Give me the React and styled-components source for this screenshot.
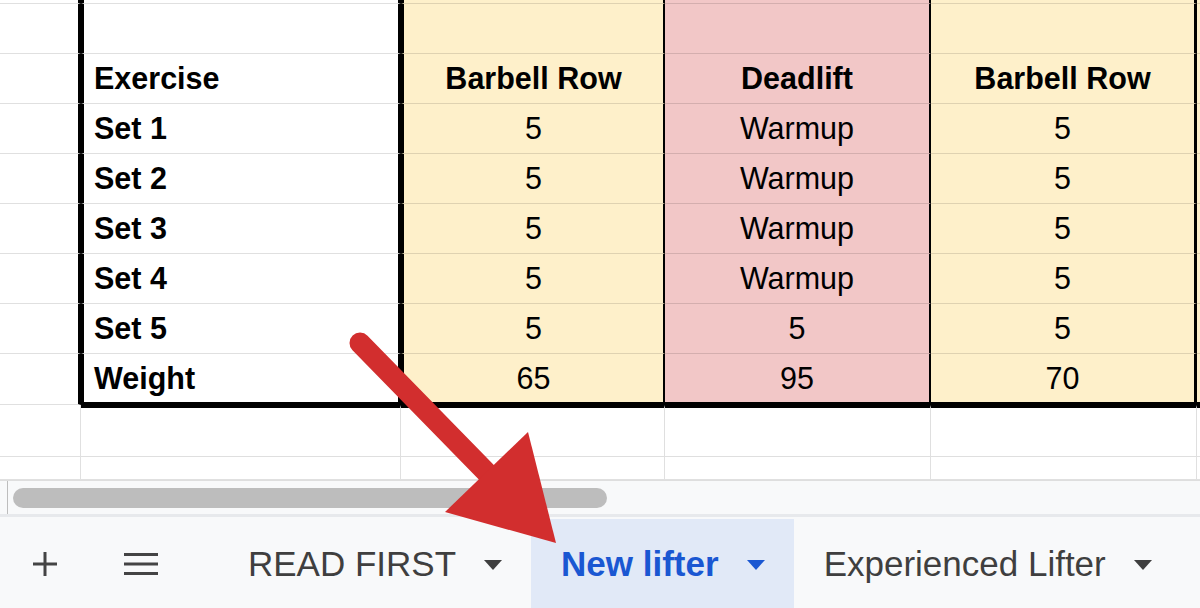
import React from "react";
import styled, { createGlobalStyle } from "styled-components";

const GlobalStyle = createGlobalStyle`
  html, body { margin: 0; padding: 0; background: #fff; }
  body { font-family: "Liberation Sans", Arial, Helvetica, sans-serif; overflow: hidden; }
  * { box-sizing: border-box; }
`;

const GRID = "rgba(0, 0, 0, 0.12)";
const HEADER_LINE = "#bdbdbd";
const YELLOW = "#fef0ca";
const PINK = "#f2c7c7";
const B3 = "3px solid #000";
const B2 = "2px solid #000";

const Page = styled.div`
  position: relative;
  width: 1200px;
  height: 608px;
  display: flex;
  flex-direction: column;
  overflow: hidden;
`;

const Sheet = styled.div`
  display: grid;
  grid-template-columns: 8px 73px 320px 264px 266px 266px 3px;
  grid-template-rows: 4px repeat(7, 50px) 51px 52px 23px;
  height: 480px;
  background: #fff;
`;

const Cell = styled.div`
  display: flex;
  align-items: center;
  justify-content: ${(p) => (p.$center ? "center" : "flex-start")};
  padding-left: ${(p) => (p.$center ? "0" : "10px")};
  background: ${(p) => p.$bg || "#fff"};
  border-right: ${(p) => p.$br || `1px solid ${GRID}`};
  border-bottom: ${(p) => p.$bb || `1px solid ${GRID}`};
  border-left: ${(p) => p.$bl || "none"};
  border-top: ${(p) => p.$bt || "none"};
  font-size: 30.5px;
  font-weight: ${(p) => (p.$bold ? 700 : 400)};
  color: #000;
  white-space: nowrap;
  overflow: hidden;
`;

const ScrollArea = styled.div`
  height: 34px;
  display: flex;
  background: #f8f9fa;
  border-top: 1px solid #dedede;
`;

const ScrollStub = styled.div`
  width: 8px;
  border-right: 1px solid ${HEADER_LINE};
`;

const ScrollTrack = styled.div`
  flex: 1;
  padding: 7px 0 0 5px;
`;

const Thumb = styled.div`
  width: 594px;
  height: 20px;
  border-radius: 10px;
  background: #bdbdbd;
`;

const TabBar = styled.div`
  height: 94px;
  display: flex;
  align-items: stretch;
  padding: 2px 0 0 21px;
  background: #f8f9fa;
  border-top: 3px solid #e7e9ec;
`;

const IconButton = styled.div`
  width: 48px;
  display: flex;
  align-items: center;
  justify-content: center;
  margin-right: ${(p) => p.$gap || 0}px;
`;

const Tab = styled.div`
  display: flex;
  align-items: center;
  gap: 28px;
  padding: 0 29px 0 30px;
  background: ${(p) => (p.$active ? "#e1e9f7" : "transparent")};
  color: ${(p) => (p.$active ? "#1a57d2" : "#3f3f3f")};
  font-size: 35px;
  font-weight: ${(p) => (p.$active ? 700 : 400)};
  white-space: nowrap;
`;

const Caret = styled.span`
  width: 0;
  height: 0;
  border-left: 9px solid transparent;
  border-right: 9px solid transparent;
  border-top: 10px solid currentColor;
  margin-top: 2px;
`;

const ArrowLayer = styled.svg`
  position: absolute;
  left: 0;
  top: 0;
  pointer-events: none;
`;

const rows = [
  { label: "", cells: ["", "", ""] },
  { label: "", cells: ["", "", ""] },
  { label: "Exercise", cells: ["Barbell Row", "Deadlift", "Barbell Row"], head: true },
  { label: "Set 1", cells: ["5", "Warmup", "5"] },
  { label: "Set 2", cells: ["5", "Warmup", "5"] },
  { label: "Set 3", cells: ["5", "Warmup", "5"] },
  { label: "Set 4", cells: ["5", "Warmup", "5"] },
  { label: "Set 5", cells: ["5", "5", "5"] },
  { label: "Weight", cells: ["65", "95", "70"] },
];

function TableRow({ row, last }) {
  const bb = last ? B3 : undefined;
  return (
    <>
      <Cell $br={`1px solid ${HEADER_LINE}`} />
      <Cell $br={B3} />
      <Cell $bl={B3} $br={B3} $bb={bb} $bold>
        {row.label}
      </Cell>
      <Cell $bl={B3} $br={B2} $bb={bb} $bg={YELLOW} $center $bold={row.head}>
        {row.cells[0]}
      </Cell>
      <Cell $br={B2} $bb={bb} $bg={PINK} $center $bold={row.head}>
        {row.cells[1]}
      </Cell>
      <Cell $br={B3} $bb={bb} $bg={YELLOW} $center $bold={row.head}>
        {row.cells[2]}
      </Cell>
      <Cell $br="none" $bb={bb} $bg={YELLOW} />
    </>
  );
}

function EmptyRow({ first }) {
  const bt = first ? B3 : undefined;
  return (
    <>
      <Cell $br={`1px solid ${HEADER_LINE}`} />
      <Cell />
      <Cell $bt={bt} />
      <Cell $bt={bt} />
      <Cell $bt={bt} />
      <Cell $bt={bt} />
      <Cell $bt={bt} $br="none" />
    </>
  );
}

function PlusIcon() {
  return (
    <svg width="26" height="26" viewBox="0 0 26 26">
      <path d="M13 1v24M1 13h24" stroke="#444" strokeWidth="3" fill="none" />
    </svg>
  );
}

function MenuIcon() {
  return (
    <svg width="34" height="22" viewBox="0 0 34 22">
      <path d="M0 1.5h34M0 11h34M0 20.5h34" stroke="#444" strokeWidth="3" fill="none" />
    </svg>
  );
}

const tabs = [
  { name: "READ FIRST" },
  { name: "New lifter", active: true },
  { name: "Experienced Lifter" },
];

export default function App() {
  return (
    <>
      <GlobalStyle />
      <Page>
        <Sheet>
          {rows.map((r, i) => (
            <TableRow key={i} row={r} last={i === rows.length - 1} />
          ))}
          <EmptyRow first />
          <EmptyRow />
        </Sheet>
        <ScrollArea>
          <ScrollStub />
          <ScrollTrack>
            <Thumb />
          </ScrollTrack>
        </ScrollArea>
        <TabBar>
          <IconButton $gap={48}>
            <PlusIcon />
          </IconButton>
          <IconButton $gap={53}>
            <MenuIcon />
          </IconButton>
          {tabs.map((t) => (
            <Tab key={t.name} $active={t.active}>
              <span>{t.name}</span>
              <Caret />
            </Tab>
          ))}
        </TabBar>
        <ArrowLayer width="1200" height="608" viewBox="0 0 1200 608">
          <line x1="360" y1="343" x2="490" y2="476" stroke="#d22e2e" strokeWidth="21" strokeLinecap="round" />
          <polygon points="528,432 445,512 556,543" fill="#d22e2e" />
        </ArrowLayer>
      </Page>
    </>
  );
}
